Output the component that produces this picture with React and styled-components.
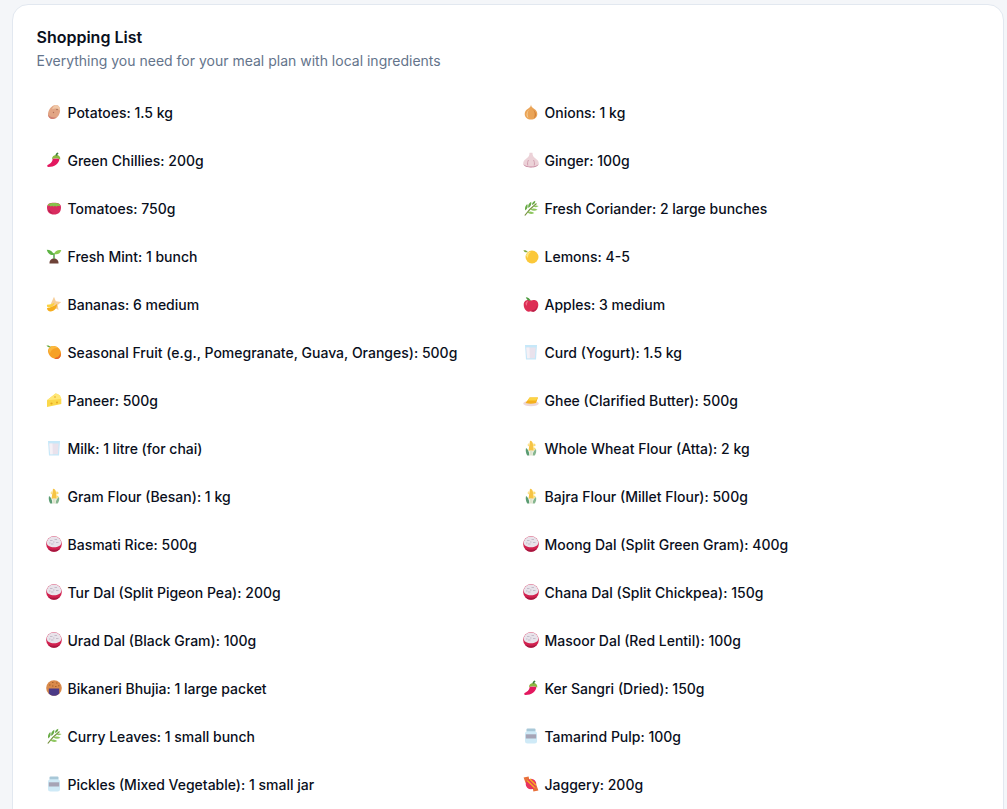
import styled, { createGlobalStyle } from "styled-components"

const GlobalStyle = createGlobalStyle`
  html, body {
    margin: 0;
    height: 809px;
    overflow: hidden;
    background: #f4f6f9;
    font-family: Inter, "Noto Sans", sans-serif;
  }
`
const Page = styled.div`
  padding: 4px 3.5px 0 11.5px;
`
const Card = styled.section`
  background: #fff;
  border: 1px solid #e2e8f0;
  border-radius: 16px;
  padding: 23px 24px 24px;
`
const Title = styled.h2`
  margin: 0;
  font-size: 16px;
  line-height: 18px;
  font-weight: 600;
  color: #0a0f1c;
`
const Subtitle = styled.p`
  margin: 5px 0 0;
  font-size: 14px;
  line-height: 20px;
  color: #64748b;
`
const List = styled.ul`
  list-style: none;
  margin: 17px 0 0;
  padding: 0;
  display: grid;
  grid-template-columns: 469px 1fr;
  column-gap: 8px;
`
const Item = styled.li`
  display: flex;
  align-items: center;
  gap: 6px;
  height: 48px;
  padding-left: 9px;
  font-size: 14px;
  font-weight: 500;
  color: #0a0f1c;
`
const Glyph = styled.svg`
  width: 16px;
  height: 16px;
  flex: none;
`

const Potato = () => (
  <Glyph viewBox="0 0 16 16">
    <path d="M10 1c3 .2 4.500 3 4 6.500-.6 4-3.500 7.500-7 7.500C4 15 1.600 13 2 9.500 2.500 5.500 6 .8 10 1z" fill="#e2a584" />
    <path d="M10 1c2.800.2 4.300 2.500 4 5.700C12.500 4.500 9.500 4 6 5.200 7 2.800 8.300.9 10 1z" fill="#f0c8a8" />
    <path d="M2.200 10.500c1.300 2.300 4.300 3.300 7.800 2.800-1 1-2 1.700-3 1.700-3 0-5-2-4.800-4.500z" fill="#d07f72" />
    <circle cx="11" cy="5.500" r=".7" fill="#96634c" />
    <circle cx="7.500" cy="8.500" r=".7" fill="#b26f58" />
  </Glyph>
)
const Chilli = () => (
  <Glyph viewBox="0 0 16 16">
    <path d="M6.500 6.500C7 9 5 11.500 2 12.800c-1.200.5-1 2.200.4 2.200 5.500.1 11-3 11-8.500z" fill="#e3185f" />
    <path d="M6 7c0-2.500 2-4 4.500-4s4 1.700 3.800 4.500C12 6 8.500 5.800 6 7z" fill="#8cb840" />
    <path d="M9.500 3.500C9.500 2.300 10.300 1 11.600.5l1 1c-1 .6-1.300 1.200-1.300 2.200z" fill="#3f7d3a" />
  </Glyph>
)
const Tomato = () => (
  <Glyph viewBox="0 0 16 16">
    <path d="M1 7.500C1 4 3.500 2.800 8 2.800s7 1.200 7 4.700c0 4.500-2.500 7-7 7s-7-2.500-7-7z" fill="#d92c5f" />
    <path d="M3.500 10c1 2 2.500 3 5 3.200-2.800.6-5.500-.6-6.500-3.500z" fill="#b81f50" />
    <path d="M2.500 4C4 2.500 12 2.500 13.500 4c.8.800.7 2-.1 2.100-.7.100-.9-.6-1.600-.4-.7.200-.7 1-1.500.9-.7-.1-.6-.9-1.300-.9s-.7 1-1.500.9c-.7-.1-.6-1-1.300-.9-.7.100-.7.800-1.500.7-.7-.1-.5-.8-1.100-.8s-.8.600-1.300.2C1.800 5.300 1.900 4.600 2.500 4z" fill="#86c44a" />
  </Glyph>
)
const Seedling = () => (
  <Glyph viewBox="0 0 16 16">
    <path d="M3.500 15.500c-.2-3.200 2-5 4.500-5s4.700 1.800 4.500 5z" fill="#6e4238" />
    <rect x="7.300" y="5" width="1.400" height="6" fill="#4c9a3f" />
    <path d="M8 7C7 3.500 4 1.700.8 1.700 1.500 5 4 7.500 8 7z" fill="#5cb343" />
    <path d="M8 6c1-3 4-4.500 7.300-3.800C14.500 5 12 7 8 6z" fill="#8ccb50" />
  </Glyph>
)
const Banana = () => (
  <Glyph viewBox="0 0 16 16">
    <path d="M8 .8l1.800 4.400 5.400.8-3.500 3 .8 5-4.500-2.500-4.500 2.500 1-5.500z" fill="#f7cf9a" />
    <path d="M1 12c3-.2 7-1.500 10-4 .3 3.500-2.500 7.500-6.500 7.500C2.500 15.500 1 14 1 12z" fill="#f6ad1d" />
    <path d="M1 8.800c3 0 5.500-1 7.500-2.300.3 2.200-2.700 5-5.700 5-1.500 0-2.200-1.300-1.800-2.700z" fill="#fbd23f" />
  </Glyph>
)
const Apple = () => (
  <Glyph viewBox="0 0 16 16">
    <path d="M8 4.500c2.500-1.300 7.300-.8 7.300 4.200 0 4-2.800 7-5 7-.9 0-1.500-.4-2.300-.4s-1.400.4-2.300.4c-2.200 0-5-3-5-7C.7 3.700 5.500 3.200 8 4.500z" fill="#dd2e55" />
    <path d="M2.500 8c0-1.700 1.200-2.800 2.800-3C4.200 6.500 3.700 8.200 4 10z" fill="#f2708a" />
    <path d="M10 14c2 0 3.500-2 4-4.500.5 3-1.500 6-3.700 6.200-1 0-1.600-.4-2.300-.4.700-.6 1.200-1.300 2-1.300z" fill="#b8224b" />
    <path d="M7.800 4.800C7 2.800 5 1.200 2.800 1.200c.8 2.400 2.700 3.700 5 3.600z" fill="#4c9a3f" />
  </Glyph>
)
const Mango = () => (
  <Glyph viewBox="0 0 16 16">
    <path d="M5 2.500c3.500-1.500 8.500.8 9.800 5.200 1 3.800-.7 7-3.800 7.300-4 .2-9-3.500-9-8C2 5 3.200 3.200 5 2.500z" fill="#f6a126" />
    <path d="M5 2.500c2.200-.9 5.300-.3 7.500 1.700-3.500-.6-7 .8-8.500 5C2.300 6.800 2.800 3.400 5 2.500z" fill="#fbb93f" />
    <path d="M10 13.500c2.300 0 3.800-1.800 4.200-4.500 1.300 3.200-.3 5.800-3.200 6-1 .1-2-.2-2.800-.6.600 0 1.300-.2 1.800-.9z" fill="#e8632b" />
    <path d="M5 3C3.800 1.700 2.300 1.200.5 1.500 1.500 3 3 3.700 5 3z" fill="#69a83a" />
  </Glyph>
)
const Cheese = () => (
  <Glyph viewBox="0 0 16 16">
    <path d="M1 8.200L9.500 1.500c3 .3 5.300 2.700 5.800 5.500v5L1 15z" fill="#fbd84a" />
    <path d="M1 8.200L9.500 1.500c3 .3 5.300 2.700 5.800 5.500z" fill="#ffe777" />
    <circle cx="5.500" cy="11.500" r="1.100" fill="#e6a91f" />
    <circle cx="11" cy="10.500" r="1" fill="#e6a91f" />
    <circle cx="9" cy="5" r=".8" fill="#e6a91f" />
  </Glyph>
)
const Glass = () => (
  <Glyph viewBox="0 0 16 16">
    <path d="M2 1h12l-1 14.500H3z" fill="#c6e8f9" />
    <path d="M3.300 3.500h9.400l-.8 10.700H4.100z" fill="#e9e2ec" />
    <path d="M3.300 3.500h3.200l.3 10.700H4.100z" fill="#f5f1f6" />
  </Glyph>
)
const Butter = () => (
  <Glyph viewBox="0 0 16 16">
    <ellipse cx="8" cy="11.500" rx="7.800" ry="2.800" fill="#edd8d8" />
    <path d="M2.500 11l4.200-5.500H15l-2 5.500c-3.500 1-7 1-10.500 0z" fill="#f5b01d" />
    <path d="M6.700 5.500H15L13 8.500H4.500z" fill="#fcd443" />
  </Glyph>
)
const Corn = () => (
  <Glyph viewBox="0 0 16 16">
    <path d="M7 .8c2 0 3 1.700 3 4l.8 6H5.500z" fill="#f6c445" />
    <path d="M10.300 3.500c2-.3 2.700 1.200 2 2.500l-2.300.6zM10 7.500c2-.5 2.900.6 2.500 2L10.300 10zM5.500 3c-.8.800-1 2-.5 3l1 .2z" fill="#fbdc70" />
    <path d="M3 8c1.800 1 3 3 3.400 7.500H4.300C2.800 13 2.400 10.500 3 8z" fill="#5a9c72" />
    <path d="M13 9c-1.800 1-3 2.500-3.400 6.500h2.100c1.300-2 1.900-4 1.300-6.500z" fill="#86b68e" />
    <path d="M6.500 10.500h3.200v5H6.500z" fill="#dfe4cf" />
  </Glyph>
)
const Rice = () => (
  <Glyph viewBox="0 0 16 16">
    <circle cx="8" cy="8" r="7.800" fill="#d2214f" />
    <path d="M.8 7C.8 3.500 4 .6 8 .6s7.200 2.900 7.200 6.400c0 2.600-3.200 4.200-7.200 4.200S.8 9.600.8 7z" fill="#e8e3ea" />
    <path d="M4 4.500h2.500M8.500 3.500H11M10 6.500h2.500M5 8h2.500M3 7h1.500M7 6h1.500" stroke="#c4bcca" strokeWidth="1" />
    <path d="M2 12.500c3 1.700 9 1.700 12 0-1.300 2-3.500 3.300-6 3.300s-4.700-1.300-6-3.300z" fill="#a5173f" />
  </Glyph>
)
const Bhujia = () => (
  <Glyph viewBox="0 0 16 16">
    <circle cx="8" cy="8" r="7.800" fill="#d98a4b" />
    <path d="M3 5h1.500M6 2.500h1.500M10 3h1.500M12 5.800h1.500M6 6h1.500M9 6.500h1.500" stroke="#a7602a" strokeWidth="1" />
    <path d="M2.800 8.500h10.400v5c-1.300 1.500-3.100 2.300-5.200 2.300s-3.900-.8-5.200-2.300z" fill="#4b3a86" />
  </Glyph>
)
const Herb = () => (
  <Glyph viewBox="0 0 16 16">
    <path d="M1.800 15.500C5 11 9 7 13.500 3.500" stroke="#76923f" strokeWidth="1.200" fill="none" />
    <path d="M2.300 10.500C1.500 8 2.300 5.800 4.200 4c1 2.500.5 4.800-1.900 6.500zM5.300 8C4.800 5.500 5.800 3 8.200 1.800c.6 2.400-.4 4.600-2.900 6.200zM9 5C8.800 3.300 10 1.300 12.200.8c.4 1.800-.7 3.500-3.200 4.200z" fill="#68ab46" />
    <path d="M4.300 12.500c2.200-1.500 4.700-1.300 7 .5-2.300 1.500-4.800 1.300-7-.5zM7.300 9.500c2.200-1.300 4.800-1.200 7.200.3-2.300 1.500-5 1.400-7.200-.3zM10.300 6.300c1.700-1 3.500-1 5.400-.2-1.600 1.500-3.700 1.500-5.400.2z" fill="#8dc65e" />
  </Glyph>
)
const Jar = () => (
  <Glyph viewBox="0 0 16 16">
    <rect x="3.500" y=".6" width="9" height="3.400" rx="1" fill="#a8c8d8" />
    <rect x="2" y="3.200" width="12" height="12.400" rx="2.500" fill="#cfeaf7" />
    <rect x="2.800" y="6.300" width="10.400" height="4.200" fill="#a6a4b6" />
  </Glyph>
)
const Candy = () => (
  <Glyph viewBox="0 0 16 16">
    <path d="M.6 1.500l5-1 1 5-4 1.500zM15.400 14.500l-5 1-1-5 4-1.500z" fill="#e8703a" />
    <circle cx="8" cy="8" r="5.300" fill="#e8335f" />
    <path d="M4.300 4.500l7.300 7.300M6.800 3l6.200 6.200" stroke="#f7b21e" strokeWidth="1.500" />
  </Glyph>
)
const Onion = () => (
  <Glyph viewBox="0 0 16 16">
    <path d="M8 .6c.3 2.200 1 3 3 4.200 2.200 1.300 3.300 3 3.300 5.200 0 3.300-2.800 5.600-6.300 5.600S1.700 13.300 1.700 10c0-2.200 1.100-3.900 3.300-5.200 2-1.200 2.700-2 3-4.200z" fill="#eaa457" />
    <path d="M7.500 5C4.500 6.500 3.800 10 5.500 14 3 12.700 2.300 7.500 7.500 5z" fill="#f7d09a" />
    <path d="M9 5c3 1.500 3.500 5.500 2 9.500 2.500-1.500 3.200-7-2-9.500z" fill="#cd7b34" />
  </Glyph>
)
const Garlic = () => (
  <Glyph viewBox="0 0 16 16">
    <path d="M6.500.8h3c0 2.700.6 3.700 2.500 5.200 2 1.500 3.800 3 3.800 5.200 0 2.800-3 4.200-7.800 4.200S.2 14 .2 11.200C.2 9 2 7.500 4 6 5.900 4.500 6.500 3.500 6.500.8z" fill="#ecd2d8" />
    <path d="M.5 12.300c1.500 1.800 4.300 2.300 7.500 2.300s6-.5 7.500-2.300c-.4 2-3.400 3.100-7.500 3.100S.9 14.300.5 12.300z" fill="#c78aa2" />
    <path d="M5.500 8c-1 1.700-1.200 3.500-.7 5.500M10.500 8c1 1.700 1.200 3.500.7 5.500" stroke="#cf9aac" strokeWidth=".9" fill="none" />
  </Glyph>
)
const Lemon = () => (
  <Glyph viewBox="0 0 16 16">
    <circle cx="9" cy="9" r="6.500" fill="#fbc83a" />
    <path d="M3 7.500c.7-2.200 2.800-3.800 5-3.800-2 1.500-3.200 3.500-3 6.500z" fill="#fee67c" />
    <path d="M4.800 4C3.600 2.500 2.200 2 .4 2.400c1 1.600 2.500 2.300 4.400 1.600z" fill="#7fa83a" />
  </Glyph>
)

const items = [
  [Potato, "Potatoes: 1.5 kg"],
  [Onion, "Onions: 1 kg"],
  [Chilli, "Green Chillies: 200g"],
  [Garlic, "Ginger: 100g"],
  [Tomato, "Tomatoes: 750g"],
  [Herb, "Fresh Coriander: 2 large bunches"],
  [Seedling, "Fresh Mint: 1 bunch"],
  [Lemon, "Lemons: 4-5"],
  [Banana, "Bananas: 6 medium"],
  [Apple, "Apples: 3 medium"],
  [Mango, "Seasonal Fruit (e.g., Pomegranate, Guava, Oranges): 500g"],
  [Glass, "Curd (Yogurt): 1.5 kg"],
  [Cheese, "Paneer: 500g"],
  [Butter, "Ghee (Clarified Butter): 500g"],
  [Glass, "Milk: 1 litre (for chai)"],
  [Corn, "Whole Wheat Flour (Atta): 2 kg"],
  [Corn, "Gram Flour (Besan): 1 kg"],
  [Corn, "Bajra Flour (Millet Flour): 500g"],
  [Rice, "Basmati Rice: 500g"],
  [Rice, "Moong Dal (Split Green Gram): 400g"],
  [Rice, "Tur Dal (Split Pigeon Pea): 200g"],
  [Rice, "Chana Dal (Split Chickpea): 150g"],
  [Rice, "Urad Dal (Black Gram): 100g"],
  [Rice, "Masoor Dal (Red Lentil): 100g"],
  [Bhujia, "Bikaneri Bhujia: 1 large packet"],
  [Chilli, "Ker Sangri (Dried): 150g"],
  [Herb, "Curry Leaves: 1 small bunch"],
  [Jar, "Tamarind Pulp: 100g"],
  [Jar, "Pickles (Mixed Vegetable): 1 small jar"],
  [Candy, "Jaggery: 200g"],
]

const App = () => {
  return (
    <Page>
      <GlobalStyle />
      <Card>
        <Title>Shopping List</Title>
        <Subtitle>Everything you need for your meal plan with local ingredients</Subtitle>
        <List>
          {items.map(([Icon, label]) => (
            <Item key={label}>
              <Icon />
              {label}
            </Item>
          ))}
        </List>
      </Card>
    </Page>
  )
}

export default App
